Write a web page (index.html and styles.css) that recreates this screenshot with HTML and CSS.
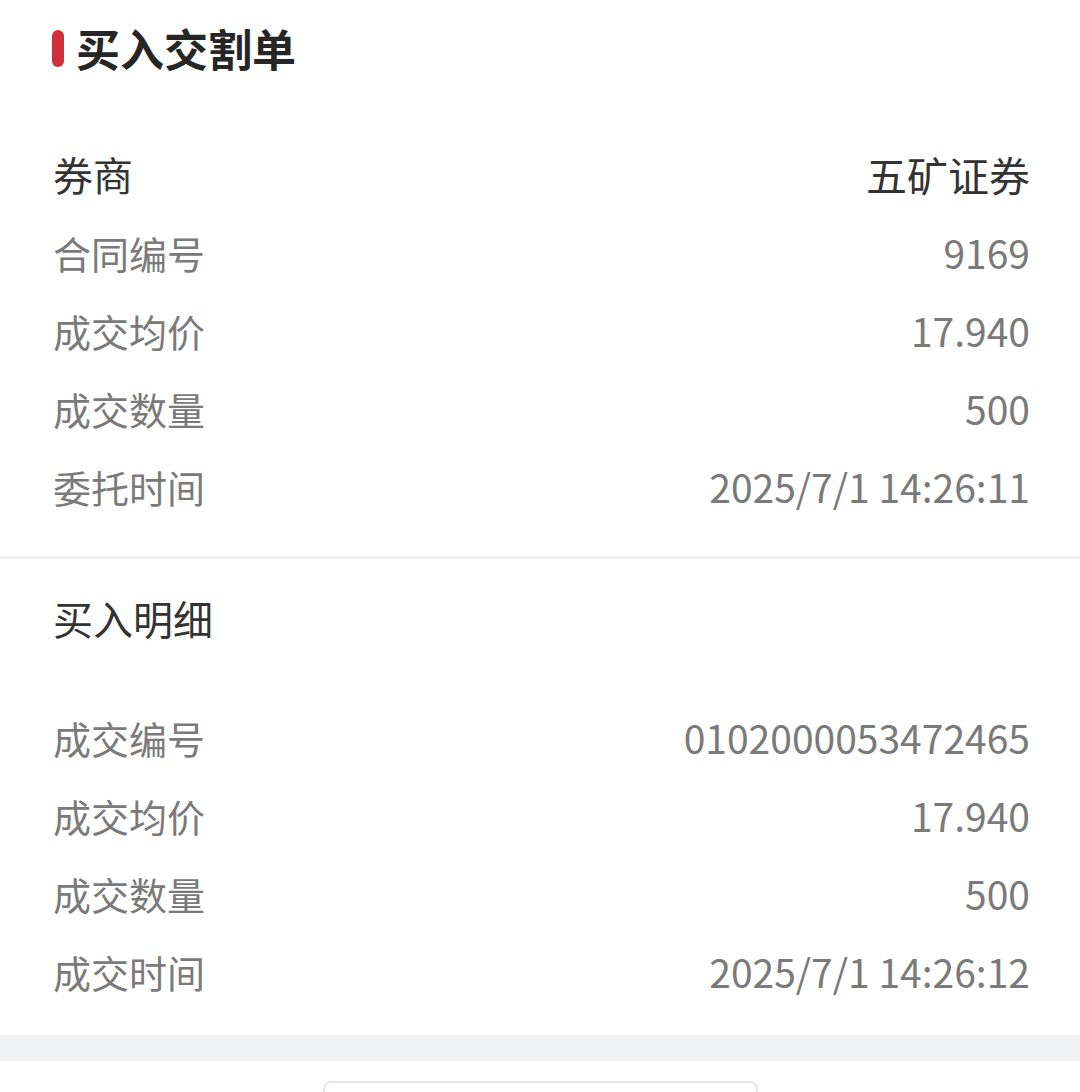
FILE: index.html
```html
<!DOCTYPE html>
<html lang="zh-CN">
<head>
  <meta charset="UTF-8">
  <title>买入交割单</title>
  <link rel="stylesheet" href="styles.css">
</head>
<body>
  <div class="page">
    <div class="head">
      <span class="mark"></span>
      <h2>买入交割单</h2>
    </div>

    <div class="list">
      <div class="row strong"><span>券商</span><span class="val">五矿证券</span></div>
      <div class="row"><span>合同编号</span><span class="val">9169</span></div>
      <div class="row"><span>成交均价</span><span class="val">17.940</span></div>
      <div class="row"><span>成交数量</span><span class="val">500</span></div>
      <div class="row"><span>委托时间</span><span class="val">2025/7/1 14:26:11</span></div>
    </div>

    <div class="line"></div>

    <div class="sub">买入明细</div>

    <div class="list second">
      <div class="row"><span>成交编号</span><span class="val">0102000053472465</span></div>
      <div class="row"><span>成交均价</span><span class="val">17.940</span></div>
      <div class="row"><span>成交数量</span><span class="val">500</span></div>
      <div class="row"><span>成交时间</span><span class="val">2025/7/1 14:26:12</span></div>
    </div>

    <div class="band"></div>
    <div class="foot"><div class="bar"></div></div>
  </div>
</body>
</html>
```

FILE: styles.css
```css
body { margin: 0; background: #fff; font-family: "Noto Sans CJK SC", "Noto Sans", sans-serif; color: #333; }
.page { width: 1080px; height: 1092px; overflow: hidden; }
.head { display: flex; align-items: center; gap: 12px; height: 96px; padding-left: 52px; }
.mark { width: 12px; height: 37px; border-radius: 6px; background: #d0303b; }
.head h2 { margin: 0; font-size: 44px; font-weight: 700; color: #262626; line-height: 1; }
.list { padding: 39px 50px 31px 53px; }
.list.second { padding-top: 21px; padding-bottom: 25px; }
.row { display: flex; justify-content: space-between; align-items: center; height: 78px; font-size: 38px; color: #7a7a7a; }
.row .val { font-size: 39px; }
.row.strong { color: #333; font-size: 40px; }
.row.strong .val { font-size: 41px; }
.line { height: 3px; background: #f2f2f4; }
.sub { height: 118px; display: flex; align-items: center; padding-left: 53px; font-size: 40px; color: #333; }
.band { height: 26px; background: #f0f1f3; }
.foot { display: flex; justify-content: center; padding-top: 20px; }
.bar { width: 435px; height: 30px; border: 2px solid #e6e6e8; border-radius: 8px; box-sizing: border-box; }
```
